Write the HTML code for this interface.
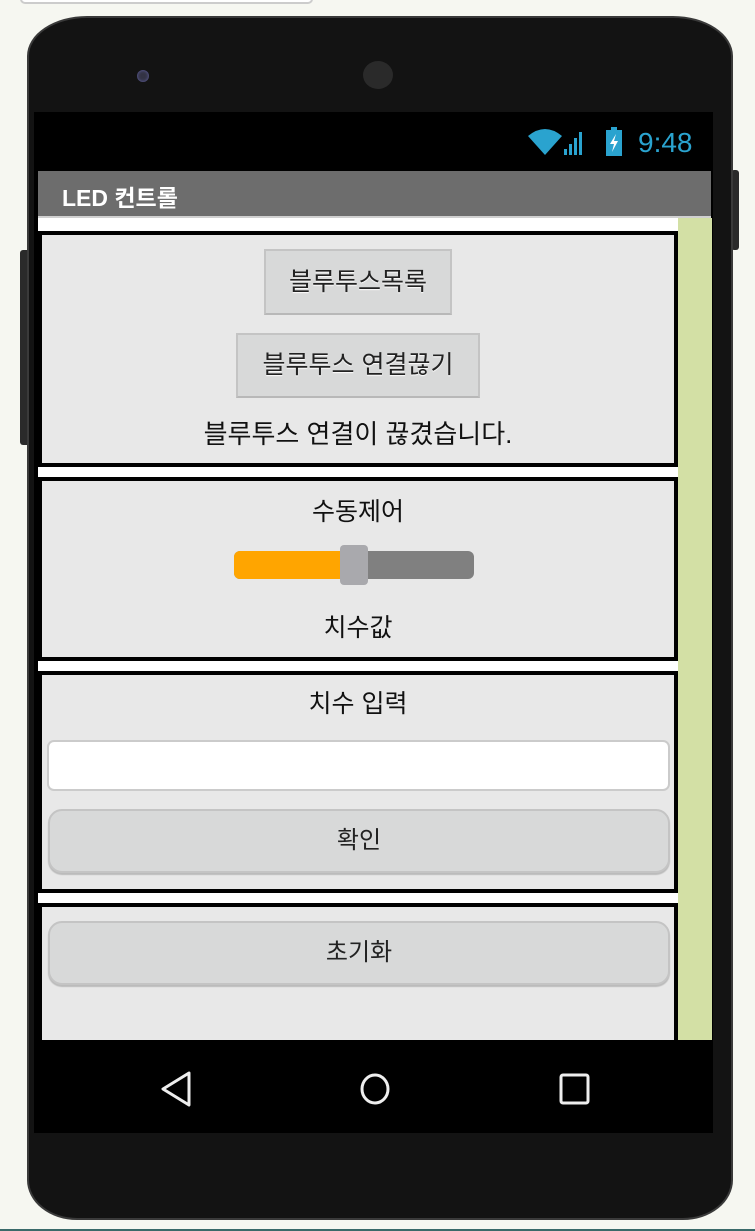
<!DOCTYPE html>
<html><head><meta charset="utf-8"><style>
*{margin:0;padding:0;box-sizing:border-box}
body{width:755px;height:1231px;background:#f6f7f1;position:relative;overflow:hidden;font-family:"Liberation Sans","Noto Sans CJK KR","NanumGothic",sans-serif}
.a{position:absolute}
.ph{left:27px;top:16px;width:706px;height:1204px;background:#131313;border-radius:60px 60px 50px 50px/40px 40px 40px 40px;border:2px solid #3a3a3a}
.panel{position:absolute;left:38px;width:640px;background:#e8e8e8;border:4px solid #000}
.btn{position:absolute;background:#d8d9d9;border:2px solid #c4c4c4;border-bottom-color:#b8b8b8;font-size:25px;color:#222;text-align:center;text-shadow:0 1px 1px #fff}
.rb{position:absolute;left:6px;width:622px;background:#d8d9d9;border:2px solid #c4c4c4;border-radius:14px;font-size:24px;color:#222;text-align:center;box-shadow:0 2px 1px #bbb}
.t{position:absolute;left:0;width:100%;text-align:center;font-size:25px;color:#111}
</style></head><body>
<div class="a" style="left:20px;top:-6px;width:293px;height:10px;border:2px solid #ccc;border-radius:6px;background:#fff"></div>
<div class="a" style="left:20px;top:250px;width:10px;height:195px;background:#2a2a2a;border-radius:3px"></div>
<div class="a" style="left:731px;top:170px;width:8px;height:80px;background:#2a2a2a;border-radius:3px"></div>
<div class="a ph"></div>
<div class="a" style="left:137px;top:70px;width:12px;height:12px;border-radius:50%;background:#334;box-shadow:inset 0 0 3px #66a"></div>
<div class="a" style="left:363px;top:61px;width:30px;height:28px;border-radius:50%;background:#2a2a2a"></div>
<div class="a" style="left:34px;top:112px;width:679px;height:1021px;background:#000"></div>
<svg class="a" style="left:525px;top:124px" width="180" height="36">
<path d="M3 12 Q20 -2 37 12 L20 31 Z" fill="#2aa3cf"/>
<rect x="39" y="25" width="3" height="6" fill="#2aa3cf"/><rect x="44" y="20" width="3" height="11" fill="#2aa3cf"/><rect x="49" y="14" width="3" height="17" fill="#2aa3cf"/><rect x="54" y="8" width="3" height="23" fill="#2aa3cf"/>
<rect x="81" y="6" width="16" height="26" fill="#2aa3cf"/><rect x="86" y="3" width="6" height="4" fill="#2aa3cf"/>
<path d="M91 10 L85 20 L89 20 L87 28 L93 17 L89 17 Z" fill="#fff"/>
<text x="113" y="28" font-size="28" fill="#2aa3cf" font-family="Liberation Sans">9:48</text></svg>
<div class="a" style="left:38px;top:171px;width:673px;height:45px;background:#6d6d6d;color:#fff;font-size:23px;padding:8px 0 0 24px;font-weight:bold">LED 컨트롤</div>
<div class="a" style="left:38px;top:216px;width:673px;height:2px;background:#d0d0d0"></div>
<div class="a" style="left:38px;top:218px;width:640px;height:822px;background:#fff"></div>
<div class="a" style="left:678px;top:218px;width:34px;height:822px;background:#d3e0a5"></div>

<div class="panel" style="top:231px;height:236px">
<div class="btn" style="left:222px;top:14px;width:188px;height:66px;line-height:62px">블루투스목록</div>
<div class="btn" style="left:194px;top:98px;width:244px;height:65px;line-height:61px">블루투스 연결끊기</div>
<div class="t" style="top:184px;font-size:26px;line-height:30px">블루투스 연결이 끊겼습니다.</div>
</div>
<div class="panel" style="top:477px;height:184px">
<div class="t" style="top:16px;line-height:30px">수동제어</div>
<div class="a" style="left:192px;top:70px;width:240px;height:28px;background:#808080;border-radius:6px"></div>
<div class="a" style="left:192px;top:70px;width:115px;height:28px;background:#ffa500;border-radius:6px 0 0 6px"></div>
<div class="a" style="left:298px;top:64px;width:28px;height:40px;background:#a9a9ad;border-radius:4px"></div>
<div class="t" style="top:132px;line-height:30px">치수값</div>
</div>
<div class="panel" style="top:671px;height:222px">
<div class="t" style="top:14px;line-height:30px">치수 입력</div>
<div class="a" style="left:5px;top:65px;width:623px;height:51px;background:#fff;border:2px solid #cbcbcb;border-radius:7px"></div>
<div class="rb" style="top:134px;height:64px;line-height:60px">확인</div>
</div>
<div class="panel" style="top:903px;height:150px;border-bottom:none">
<div class="rb" style="top:14px;height:64px;line-height:60px">초기화</div>
</div>
<div class="a" style="left:34px;top:1040px;width:679px;height:93px;background:#000"></div>
<svg class="a" style="left:150px;top:1065px" width="460" height="50">
<path d="M39 8 L13 24 L39 40 Z" fill="none" stroke="#eee" stroke-width="3" stroke-linejoin="round"/>
<ellipse cx="225" cy="24" rx="13" ry="14" fill="none" stroke="#eee" stroke-width="3"/>
<rect x="411" y="10" width="27" height="28" rx="2" fill="none" stroke="#eee" stroke-width="3"/>
</svg>
<div class="a" style="left:0;top:1229px;width:755px;height:2px;background:#3a6a6a"></div>
</body></html>
